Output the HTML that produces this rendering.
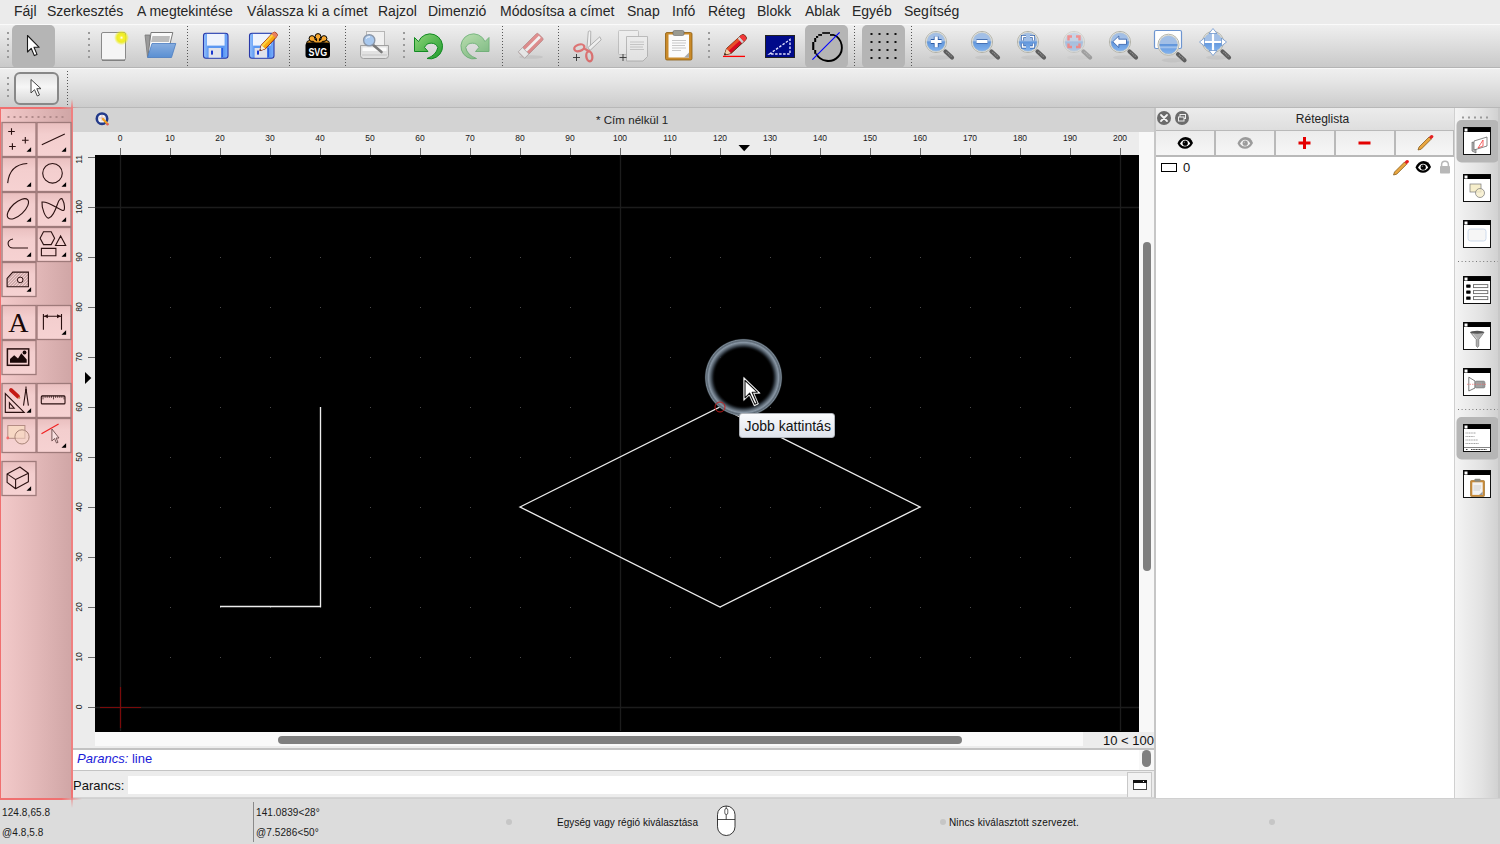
<!DOCTYPE html>
<html><head><meta charset="utf-8">
<style>
*{margin:0;padding:0;box-sizing:border-box}
html,body{width:1500px;height:844px;overflow:hidden;background:#ececec;font-family:"Liberation Sans",sans-serif;color:#222}
.a{position:absolute}
.menu span{position:absolute;top:3px;font-size:14px;line-height:17px;color:#262626}
svg{position:absolute;overflow:visible}
</style></head><body>

<!-- MENU BAR -->
<div class="a menu" style="left:0;top:0;width:1500px;height:24px;background:#ebebeb">
<span style="left:14px">Fájl</span>
<span style="left:47px">Szerkesztés</span>
<span style="left:137px">A megtekintése</span>
<span style="left:247px">Válassza ki a címet</span>
<span style="left:378px">Rajzol</span>
<span style="left:428px">Dimenzió</span>
<span style="left:500px">Módosítsa a címet</span>
<span style="left:627px">Snap</span>
<span style="left:672px">Infó</span>
<span style="left:708px">Réteg</span>
<span style="left:757px">Blokk</span>
<span style="left:805px">Ablak</span>
<span style="left:852px">Egyéb</span>
<span style="left:904px">Segítség</span>
</div>

<!-- TOOLBAR 1 -->
<div class="a" style="left:0;top:24px;width:1500px;height:44px;background:linear-gradient(#efefef,#e4e4e4 30%,#c9c9c9);border-top:1px solid #fafafa;border-bottom:1px solid #b4b4b4"></div>
<!-- TOOLBAR 2 -->
<div class="a" style="left:0;top:68px;width:1500px;height:40px;background:linear-gradient(#efefef,#e6e6e6 30%,#cccccc);border-top:1px solid #f8f8f8;border-bottom:1px solid #b8b8b8"></div>


<!-- TOOLBAR ICONS -->
<svg class="a" style="left:0;top:0" width="1500" height="110" viewBox="0 0 1500 110">
<defs>
<radialGradient id="glow"><stop offset="0" stop-color="#fff"/><stop offset="0.25" stop-color="#f8f030"/><stop offset="0.6" stop-color="#ecec10" stop-opacity="0.9"/><stop offset="1" stop-color="#ecec10" stop-opacity="0"/></radialGradient>
<linearGradient id="flop" x1="0" y1="0" x2="1" y2="0"><stop offset="0" stop-color="#9ac6ff"/><stop offset="0.2" stop-color="#5c98f2"/><stop offset="0.8" stop-color="#5a96f0"/><stop offset="1" stop-color="#7ab0ff"/></linearGradient><linearGradient id="blueF" x1="0" y1="0" x2="0" y2="1"><stop offset="0" stop-color="#88aee0"/><stop offset="1" stop-color="#5a8fd2"/></linearGradient>
<linearGradient id="zoomB2" x1="0" y1="0" x2="0" y2="1"><stop offset="0" stop-color="#5f94da"/><stop offset="1" stop-color="#86b6f0"/></linearGradient><linearGradient id="zoomB" x1="0" y1="0" x2="0" y2="1"><stop offset="0" stop-color="#a8c6ee"/><stop offset="0.5" stop-color="#6d9be0"/><stop offset="1" stop-color="#4d86d6"/></linearGradient>
<linearGradient id="green" x1="0" y1="0" x2="1" y2="1"><stop offset="0" stop-color="#8fd67a"/><stop offset="1" stop-color="#1f9a2c"/></linearGradient>
<linearGradient id="btn2" x1="0" y1="0" x2="0" y2="1"><stop offset="0" stop-color="#e2e2e2"/><stop offset="0.45" stop-color="#f6f6f6"/><stop offset="1" stop-color="#d6d6d6"/></linearGradient>
</defs>
<!-- handles & separators -->
<g fill="#9a9a9a">
<rect x="7" y="32" width="2" height="2"/><rect x="7" y="38" width="2" height="2"/><rect x="7" y="44" width="2" height="2"/><rect x="7" y="50" width="2" height="2"/><rect x="7" y="56" width="2" height="2"/>
<rect x="88" y="32" width="2" height="2"/><rect x="88" y="38" width="2" height="2"/><rect x="88" y="44" width="2" height="2"/><rect x="88" y="50" width="2" height="2"/><rect x="88" y="56" width="2" height="2"/>
<rect x="403" y="32" width="2" height="2"/><rect x="403" y="38" width="2" height="2"/><rect x="403" y="44" width="2" height="2"/><rect x="403" y="50" width="2" height="2"/><rect x="403" y="56" width="2" height="2"/>
<rect x="708" y="32" width="2" height="2"/><rect x="708" y="38" width="2" height="2"/><rect x="708" y="44" width="2" height="2"/><rect x="708" y="50" width="2" height="2"/><rect x="708" y="56" width="2" height="2"/>
<rect x="7" y="77" width="2" height="2"/><rect x="7" y="83" width="2" height="2"/><rect x="7" y="89" width="2" height="2"/><rect x="7" y="95" width="2" height="2"/>
</g>
<g stroke="#555" stroke-width="1" stroke-dasharray="1 2">
<line x1="187.5" y1="26" x2="187.5" y2="66"/><line x1="289.5" y1="26" x2="289.5" y2="66"/><line x1="345.5" y1="26" x2="345.5" y2="66"/>
<line x1="502.5" y1="26" x2="502.5" y2="66"/><line x1="558.5" y1="26" x2="558.5" y2="66"/><line x1="854.5" y1="26" x2="854.5" y2="66"/><line x1="911.5" y1="26" x2="911.5" y2="66"/>
<line x1="67.5" y1="71" x2="67.5" y2="105"/>
</g>
<!-- selected select button -->
<rect x="12" y="25" width="43" height="43" rx="5" fill="#b5b5b5"/>
<path d="M27.5 35.5 L27.5 52 L31.2 48.3 L34.3 55.6 L37 54.4 L34 47.3 L39.2 47.3 Z" fill="#fff" stroke="#1a1a1a" stroke-width="1.1" stroke-linejoin="round"/>
<!-- new -->
<rect x="101.5" y="32.5" width="24" height="27.5" rx="1.5" fill="#f5f5f5" stroke="#8a8a8a" stroke-width="1"/>
<line x1="102" y1="60.3" x2="125" y2="60.3" stroke="#777" stroke-width="1"/>
<circle cx="121.5" cy="37.7" r="7.5" fill="url(#glow)"/>
<!-- open -->
<path d="M145 35 L150 35 L150.5 57 L147.5 57 Z" fill="#9a9a9a" stroke="#777" stroke-width="0.8"/>
<path d="M151 32.5 L172.8 32.5 L170 44 L148 56 Z" fill="#fafafa" stroke="#7a7a7a" stroke-width="1"/>
<path d="M152.5 36 L170 36 L169 42 L151 42 Z" fill="#bdbdbd"/>
<path d="M152 43.5 L175.8 43.5 L171.5 57.5 L147.5 57.5 Z" fill="url(#blueF)" stroke="#4a7cc0" stroke-width="0.8"/>
<!-- save -->
<g id="floppy">
<rect x="203.5" y="33.3" width="24.5" height="25" rx="2.5" fill="url(#flop)" stroke="#2838a8" stroke-width="1.1"/>
<rect x="207" y="34" width="17.6" height="11.6" fill="#eef3fd"/>
<rect x="208.6" y="48" width="12.4" height="9.7" fill="#e0e2ea"/>
<rect x="211" y="50.6" width="2" height="4" fill="#1838d0"/>
<rect x="221.5" y="48" width="1.5" height="9" fill="#2a5ae0"/>
</g>
<!-- save as -->
<use href="#floppy" x="46" y="0"/>
<g transform="translate(259.6 51) rotate(-47)">
<path d="M0.3 0 L5.5 -2.8 L21.5 -2.8 Q24.6 -2.8 24.6 0 Q24.6 2.8 21.5 2.8 L5.5 2.8 Z" fill="#f8a810" stroke="#902010" stroke-width="0.9" stroke-linejoin="round"/>
<rect x="5.5" y="-2.7" width="16" height="2.2" fill="#ffd040"/>
<path d="M20.5 -2.7 L21.5 -2.7 Q24.3 -2.7 24.3 0 Q24.3 2.7 21.5 2.7 L20.5 2.7 Z" fill="#e88060"/>
<path d="M0.6 0 L5.5 -2.7 L5.5 2.7 Z" fill="#f4f0e0"/>
<path d="M0.3 0 L1.8 -0.9 L1.8 0.9 Z" fill="#222"/>
</g>
<!-- svg -->
<g><line x1="318" y1="43.5" x2="309.50" y2="43.50" stroke="#000" stroke-width="4"/><line x1="318" y1="43.5" x2="311.99" y2="38.55" stroke="#000" stroke-width="4"/><line x1="318" y1="43.5" x2="318.00" y2="36.50" stroke="#000" stroke-width="4"/><line x1="318" y1="43.5" x2="324.01" y2="38.55" stroke="#000" stroke-width="4"/><line x1="318" y1="43.5" x2="326.50" y2="43.50" stroke="#000" stroke-width="4"/><circle cx="309.50" cy="43.50" r="2.9" fill="#f7a830" stroke="#000" stroke-width="1"/><circle cx="311.99" cy="38.55" r="2.9" fill="#f7a830" stroke="#000" stroke-width="1"/><circle cx="318.00" cy="36.50" r="2.9" fill="#f7a830" stroke="#000" stroke-width="1"/><circle cx="324.01" cy="38.55" r="2.9" fill="#f7a830" stroke="#000" stroke-width="1"/><circle cx="326.50" cy="43.50" r="2.9" fill="#f7a830" stroke="#000" stroke-width="1"/><line x1="318" y1="43.5" x2="309.50" y2="43.50" stroke="#f7a830" stroke-width="1.8"/><line x1="318" y1="43.5" x2="311.99" y2="38.55" stroke="#f7a830" stroke-width="1.8"/><line x1="318" y1="43.5" x2="318.00" y2="36.50" stroke="#f7a830" stroke-width="1.8"/><line x1="318" y1="43.5" x2="324.01" y2="38.55" stroke="#f7a830" stroke-width="1.8"/><line x1="318" y1="43.5" x2="326.50" y2="43.50" stroke="#f7a830" stroke-width="1.8"/></g>
<rect x="305.5" y="42.5" width="24.5" height="15.5" rx="3" fill="#000"/>
<text x="317.8" y="56" font-family="Liberation Sans" font-weight="bold" font-size="10.5" fill="#fff" text-anchor="middle" transform="translate(317.8 0) scale(0.85 1) translate(-317.8 0)">SVG</text>
<!-- print preview -->
<rect x="366.5" y="31.5" width="18" height="15" fill="#f0f0f0" stroke="#b0b0b0" stroke-width="0.9"/>
<path d="M360.5 45.5 L388.5 45.5 L388.5 55.5 Q388.5 58.5 385.5 58.5 L363.5 58.5 Q360.5 58.5 360.5 55.5 Z" fill="#e2e2e2" stroke="#9a9a9a" stroke-width="0.9"/>
<rect x="362.5" y="47.5" width="24" height="3.5" fill="#fbfbfb"/>
<path d="M362 55 H387" stroke="#c4c4c4" stroke-width="1"/>
<line x1="372" y1="44" x2="381.5" y2="52" stroke="#7a7a7a" stroke-width="2.6" stroke-linecap="round"/>
<circle cx="369.2" cy="40.3" r="5.6" fill="#a8c8ee" stroke="#8a96a8" stroke-width="1.4"/>
<path d="M366 38.5 Q367.5 36.5 370 36.8" stroke="#fff" stroke-width="1" fill="none"/>
<!-- undo -->
<path d="M414.5 37.5 L418.5 41.6 A12.5 12.5 0 1 1 427 58.5 Q436.5 55 437.8 47.5 A7.3 7.3 0 0 0 424.5 47.4 L428 51.5 L414.5 51.5 Z" fill="url(#green)" stroke="#128a22" stroke-width="1" stroke-linejoin="round"/>
<!-- redo -->
<g opacity="0.5"><path d="M 489.00 37.5 L 485.00 41.6 A 12.5 12.5 0 1 0 476.50 58.5 Q 467.00 55.0 465.70 47.5 A 7.3 7.3 0 0 1 479.00 47.4 L 475.50 51.5 L 489.00 51.5 Z" fill="url(#green)" stroke="#128a22" stroke-width="1" stroke-linejoin="round"/></g>
<!-- eraser -->
<g opacity="0.55">
<ellipse cx="531" cy="57" rx="12" ry="1.8" fill="#bbb"/>
<g transform="translate(531 45.5) rotate(-45)">
<rect x="-13.5" y="-4.5" width="27" height="9" rx="1.6" fill="#dd4a4a" stroke="#9a3a3a" stroke-width="0.8"/>
<rect x="-8" y="-1.4" width="20.5" height="2.8" fill="#fff"/>
<rect x="-13.5" y="-4.5" width="6" height="9" fill="#f4f4f4" stroke="#8a8a8a" stroke-width="0.8"/>
</g>
</g>
<!-- cut -->
<g opacity="0.6">
<path d="M586.8 50 L588.3 31.5 Q589.5 30.5 590.8 31.3 L590.3 50 Z" fill="#fafafa" stroke="#777" stroke-width="0.8"/>
<path d="M588 47.5 L599.8 36.8 L601.2 39.8 L590 50.5 Z" fill="#fafafa" stroke="#777" stroke-width="0.8"/>
<ellipse cx="579.3" cy="47.8" rx="5.2" ry="3.2" fill="none" stroke="#dd3030" stroke-width="2.3" transform="rotate(-18 579.3 47.8)"/>
<ellipse cx="589.3" cy="56.3" rx="3" ry="5" fill="none" stroke="#dd3030" stroke-width="2.3" transform="rotate(-8 589.3 56.3)"/>
<path d="M584 48.5 L589.5 51.5" stroke="#dd3030" stroke-width="2"/>
</g>
<path d="M573 57.5 H580 M576.5 54 V61" stroke="#333" stroke-width="0.9"/>
<!-- copy -->
<g opacity="0.5">
<rect x="618.5" y="30.5" width="20" height="24" rx="1" fill="#f4f4f4" stroke="#999" stroke-width="0.9"/>
<path d="M626.5 36.5 L647.5 36.5 L647.5 56.5 L643 61 L626.5 61 Z" fill="#f4f4f4" stroke="#888" stroke-width="0.9"/>
<path d="M630 42 H644 M630 44.5 H644 M630 47 H643 M630 49.5 H644" stroke="#999" stroke-width="0.8"/>
</g>
<path d="M619.5 57.5 H626.5 M623 54 V61" stroke="#333" stroke-width="0.9"/>
<!-- paste -->
<rect x="665.5" y="32.5" width="26.5" height="27.5" rx="1.5" fill="#c98a2a" stroke="#8d5d10" stroke-width="0.8"/>
<path d="M668.5 34.5 L689 34.5 L689 57.5 L668.5 57.5 Z" fill="#fbfbfb"/>
<path d="M684 57.5 L689 52.5 L689 57.5 Z" fill="#aaa"/>
<path d="M672 40.5 H686 M672 43 H686 M672 45.5 H685 M672 48 H686 M672 50.5 H681" stroke="#bbb" stroke-width="0.8"/>
<rect x="673" y="30.5" width="11" height="5" rx="1.5" fill="#9a9a90" stroke="#666" stroke-width="0.6"/>
<!-- pencil -->
<line x1="723" y1="56.4" x2="745" y2="56.4" stroke="#f00" stroke-width="1.3"/>
<g transform="translate(724 55.4) rotate(-42.5)">
<path d="M0.5 0 L6.5 -3.3 L23 -3.3 L26 -3.3 Q29 -3.3 29 0 Q29 3.3 26 3.3 L6.5 3.3 Z" fill="#d80a22" stroke="#5a3010" stroke-width="0.9" stroke-linejoin="round"/>
<rect x="6.5" y="-3.2" width="16" height="3" fill="#e8502a"/>
<rect x="21.5" y="-3.2" width="2.5" height="6.4" fill="#d0d0d0"/>
<path d="M24 -3.2 L26 -3.2 Q28.6 -3.2 28.6 0 Q28.6 3.2 26 3.2 L24 3.2 Z" fill="#f03838"/>
<path d="M0.8 0 L6.5 -3.2 L6.5 3.2 Z" fill="#f2d2a8"/>
<path d="M0.5 0 L2.4 -1.1 L2.4 1.1 Z" fill="#111"/>
</g>
<!-- blue triangle -->
<rect x="765.5" y="35.5" width="29" height="22" fill="#000a8a" stroke="#222" stroke-width="1"/>
<path d="M769.5 54 L790 39.5 L790 54 Z" fill="none" stroke="#e0e0ff" stroke-width="1.4" stroke-dasharray="2.5 1.5"/>
<!-- selected circle/line -->
<rect x="805" y="25" width="43" height="43" rx="5" fill="#b5b5b5"/>
<g fill="#000"><rect x="822.2" y="32.2" width="7.8" height="1.6"/><rect x="818.2" y="34.1" width="3.8" height="1.7"/><rect x="830" y="34.1" width="4" height="1.7"/><rect x="816" y="36" width="2.2" height="1.9"/><rect x="814.2" y="38" width="2" height="4"/><rect x="812.2" y="42" width="2.1" height="8"/><rect x="814.2" y="50" width="2" height="3.8"/></g><path d="M816.2 53.6 A13.6 13.6 0 1 0 834 35" fill="none" stroke="#000" stroke-width="1.9"/>
<line x1="812.4" y1="59.6" x2="839.6" y2="32.4" stroke="#0000ff" stroke-width="1.1"/>
<!-- grid -->
<rect x="862" y="25" width="43" height="43" rx="5" fill="#b5b5b5"/>
<g fill="#111">
<rect x="870.5" y="33" width="2" height="2"/><rect x="878.5" y="33" width="2" height="2"/><rect x="886.5" y="33" width="2" height="2"/><rect x="894.5" y="33" width="2" height="2"/>
<rect x="870.5" y="41" width="2" height="2"/><rect x="878.5" y="41" width="2" height="2"/><rect x="886.5" y="41" width="2" height="2"/><rect x="894.5" y="41" width="2" height="2"/>
<rect x="870.5" y="49" width="2" height="2"/><rect x="878.5" y="49" width="2" height="2"/><rect x="886.5" y="49" width="2" height="2"/><rect x="894.5" y="49" width="2" height="2"/>
<rect x="870.5" y="57" width="2" height="2"/><rect x="878.5" y="57" width="2" height="2"/><rect x="886.5" y="57" width="2" height="2"/><rect x="894.5" y="57" width="2" height="2"/>
</g>
<g><ellipse cx="940" cy="57.5" rx="11" ry="2.2" fill="#000" opacity="0.05"/><path d="M945.5 51.5 L952 57.5" stroke="#5e5e5e" stroke-width="4.2" stroke-linecap="round"/><path d="M946.5 52 L951.5 56.5" stroke="#9a9a9a" stroke-width="1.2" stroke-dasharray="1 1"/><circle cx="936" cy="42" r="10.6" fill="#f2f2ec" stroke="#aeaea4" stroke-width="0.9"/><clipPath id="zc936"><circle cx="936" cy="42" r="9.4"/></clipPath><g clip-path="url(#zc936)"><rect x="926" y="32" width="20" height="9.2" fill="#a2bfe6"/><rect x="926" y="41.2" width="20" height="11" fill="url(#zoomB2)"/></g><circle cx="936" cy="42" r="9.4" fill="none" stroke="#c8c8c0" stroke-width="0.6"/><path d="M930.8 41.5 H941.6 M936.2 36.6 V47.2" stroke="#2d5ca6" stroke-width="4.800000000000001" fill="none"/><path d="M930.8 41.5 H941.6 M936.2 36.6 V47.2" stroke="#fff" stroke-width="3.2" fill="none"/></g><g><ellipse cx="986" cy="57.5" rx="11" ry="2.2" fill="#000" opacity="0.05"/><path d="M991.5 51.5 L998 57.5" stroke="#5e5e5e" stroke-width="4.2" stroke-linecap="round"/><path d="M992.5 52 L997.5 56.5" stroke="#9a9a9a" stroke-width="1.2" stroke-dasharray="1 1"/><circle cx="982" cy="42" r="10.6" fill="#f2f2ec" stroke="#aeaea4" stroke-width="0.9"/><clipPath id="zc982"><circle cx="982" cy="42" r="9.4"/></clipPath><g clip-path="url(#zc982)"><rect x="972" y="32" width="20" height="9.2" fill="#a2bfe6"/><rect x="972" y="41.2" width="20" height="11" fill="url(#zoomB2)"/></g><circle cx="982" cy="42" r="9.4" fill="none" stroke="#c8c8c0" stroke-width="0.6"/><path d="M976.5 41.5 H987.5" stroke="#2d5ca6" stroke-width="4.800000000000001" fill="none"/><path d="M976.5 41.5 H987.5" stroke="#fff" stroke-width="3.2" fill="none"/></g><g><ellipse cx="1032" cy="57.5" rx="11" ry="2.2" fill="#000" opacity="0.05"/><path d="M1037.5 51.5 L1044 57.5" stroke="#5e5e5e" stroke-width="4.2" stroke-linecap="round"/><path d="M1038.5 52 L1043.5 56.5" stroke="#9a9a9a" stroke-width="1.2" stroke-dasharray="1 1"/><circle cx="1028" cy="42" r="10.6" fill="#f2f2ec" stroke="#aeaea4" stroke-width="0.9"/><clipPath id="zc1028"><circle cx="1028" cy="42" r="9.4"/></clipPath><g clip-path="url(#zc1028)"><rect x="1018" y="32" width="20" height="9.2" fill="#a2bfe6"/><rect x="1018" y="41.2" width="20" height="11" fill="url(#zoomB2)"/></g><circle cx="1028" cy="42" r="9.4" fill="none" stroke="#c8c8c0" stroke-width="0.6"/><path d="M1022.5 40.5 V36.5 H1026 M1030 36.5 H1033.5 V40.5 M1033.5 43.5 V47 H1030 M1026 47 H1022.5 V43.5" fill="none" stroke="#2d5ca6" stroke-width="3"/><path d="M1022.5 40.5 V36.5 H1026 M1030 36.5 H1033.5 V40.5 M1033.5 43.5 V47 H1030 M1026 47 H1022.5 V43.5" fill="none" stroke="#fff" stroke-width="1.6"/></g><g opacity="0.45"><ellipse cx="1078" cy="57.5" rx="11" ry="2.2" fill="#000" opacity="0.05"/><path d="M1083.5 51.5 L1090 57.5" stroke="#5e5e5e" stroke-width="4.2" stroke-linecap="round"/><path d="M1084.5 52 L1089.5 56.5" stroke="#9a9a9a" stroke-width="1.2" stroke-dasharray="1 1"/><circle cx="1074" cy="42" r="10.6" fill="#f2f2ec" stroke="#aeaea4" stroke-width="0.9"/><clipPath id="zc1074"><circle cx="1074" cy="42" r="9.4"/></clipPath><g clip-path="url(#zc1074)"><rect x="1064" y="32" width="20" height="9.2" fill="#a2bfe6"/><rect x="1064" y="41.2" width="20" height="11" fill="url(#zoomB2)"/></g><circle cx="1074" cy="42" r="9.4" fill="none" stroke="#c8c8c0" stroke-width="0.6"/><path d="M1068.5 40.5 V36.5 H1072 M1076 36.5 H1079.5 V40.5 M1079.5 43.5 V47 H1076 M1072 47 H1068.5 V43.5" fill="none" stroke="#ff2a2a" stroke-width="2.4"/></g><g><ellipse cx="1124" cy="57.5" rx="11" ry="2.2" fill="#000" opacity="0.05"/><path d="M1129.5 51.5 L1136 57.5" stroke="#5e5e5e" stroke-width="4.2" stroke-linecap="round"/><path d="M1130.5 52 L1135.5 56.5" stroke="#9a9a9a" stroke-width="1.2" stroke-dasharray="1 1"/><circle cx="1120" cy="42" r="10.6" fill="#f2f2ec" stroke="#aeaea4" stroke-width="0.9"/><clipPath id="zc1120"><circle cx="1120" cy="42" r="9.4"/></clipPath><g clip-path="url(#zc1120)"><rect x="1110" y="32" width="20" height="9.2" fill="#a2bfe6"/><rect x="1110" y="41.2" width="20" height="11" fill="url(#zoomB2)"/></g><circle cx="1120" cy="42" r="9.4" fill="none" stroke="#c8c8c0" stroke-width="0.6"/><path d="M1112.8 41.7 L1118.8 36 V39.2 H1126.5 V44.4 H1118.8 V47.5 Z" fill="#fff" stroke="#2d5ca6" stroke-width="0.8" stroke-linejoin="round"/></g><rect x="1154.5" y="30.5" width="27" height="18" rx="1.5" fill="#fff" stroke="#6d95d0" stroke-width="1.2"/><g><ellipse cx="1172.5" cy="60.3" rx="11" ry="2.2" fill="#000" opacity="0.05"/><path d="M1178.0 54.3 L1184.5 60.3" stroke="#5e5e5e" stroke-width="4.2" stroke-linecap="round"/><path d="M1179.0 54.8 L1184.0 59.3" stroke="#9a9a9a" stroke-width="1.2" stroke-dasharray="1 1"/><circle cx="1168.5" cy="44.8" r="10.6" fill="#f2f2ec" stroke="#aeaea4" stroke-width="0.9"/><clipPath id="zc1168"><circle cx="1168.5" cy="44.8" r="9.4"/></clipPath><g clip-path="url(#zc1168)"><rect x="1158.5" y="34.8" width="20" height="9.2" fill="#a2bfe6"/><rect x="1158.5" y="44.0" width="20" height="11" fill="url(#zoomB2)"/></g><circle cx="1168.5" cy="44.8" r="9.4" fill="none" stroke="#c8c8c0" stroke-width="0.6"/><rect x="1159.1" y="46.3" width="18.8" height="2" fill="#fff" opacity="0.35"/></g><g><ellipse cx="1217" cy="57.5" rx="11" ry="2.2" fill="#000" opacity="0.05"/><path d="M1222.5 51.5 L1229 57.5" stroke="#5e5e5e" stroke-width="4.2" stroke-linecap="round"/><path d="M1223.5 52 L1228.5 56.5" stroke="#9a9a9a" stroke-width="1.2" stroke-dasharray="1 1"/><circle cx="1213" cy="42" r="10.6" fill="#f2f2ec" stroke="#aeaea4" stroke-width="0.9"/><clipPath id="zc1213"><circle cx="1213" cy="42" r="9.4"/></clipPath><g clip-path="url(#zc1213)"><rect x="1203" y="32" width="20" height="9.2" fill="#a2bfe6"/><rect x="1203" y="41.2" width="20" height="11" fill="url(#zoomB2)"/></g><circle cx="1213" cy="42" r="9.4" fill="none" stroke="#c8c8c0" stroke-width="0.6"/><path d="M1213 31 V53 M1202 42 H1224" stroke="#fff" stroke-width="2.2"/><path d="M1213 28.5 l-4 5 h8 Z M1213 55.5 l-4 -5 h8 Z M1199.5 42 l5 -4 v8 Z M1226.5 42 l-5 -4 v8 Z" fill="#fff" stroke="#5a88c8" stroke-width="0.7" stroke-linejoin="round"/></g>
<!-- toolbar2 select button -->
<rect x="15" y="73" width="43" height="31" rx="5" fill="url(#btn2)" stroke="#888" stroke-width="2"/>
<path d="M31 79.5 L31 93 L34.5 89.7 L37.3 96 L39.5 95 L36.8 88.7 L41 88.7 Z" fill="#fff" stroke="#444" stroke-width="1" stroke-linejoin="round"/>
</svg>

<!-- LEFT TOOLBAR -->
<div class="a" style="left:0;top:108px;width:73px;height:691px;background:linear-gradient(90deg,#f3caca,#e2b8b8 50%,#cfa5a5)"></div>
<div class="a" style="left:0;top:107px;width:80px;height:2px;background:linear-gradient(90deg,#f07070 75%,rgba(240,112,112,0))"></div>
<div class="a" style="left:0;top:108px;width:1px;height:691px;background:#f07070"></div>
<div class="a" style="left:71px;top:99px;width:2px;height:700px;background:linear-gradient(#f0707000,#f08080 9px)"></div>
<svg class="a" style="left:0;top:100px" width="80" height="410" viewBox="0 100 80 410">
<defs><linearGradient id="pb" x1="0" y1="0" x2="0" y2="1"><stop offset="0" stop-color="#e9bfbf"/><stop offset="0.35" stop-color="#f3cece"/><stop offset="1" stop-color="#f6d2d2"/></linearGradient></defs>
<rect x="7.5" y="116" width="2" height="2" fill="#b08a8a"/><rect x="13.5" y="116" width="2" height="2" fill="#b08a8a"/><rect x="19.5" y="116" width="2" height="2" fill="#b08a8a"/><rect x="25.5" y="116" width="2" height="2" fill="#b08a8a"/><rect x="31.5" y="116" width="2" height="2" fill="#b08a8a"/><rect x="37.5" y="116" width="2" height="2" fill="#b08a8a"/><rect x="43.5" y="116" width="2" height="2" fill="#b08a8a"/><rect x="49.5" y="116" width="2" height="2" fill="#b08a8a"/><rect x="55.5" y="116" width="2" height="2" fill="#b08a8a"/><rect x="61.5" y="116" width="2" height="2" fill="#b08a8a"/>
<rect x="2.0" y="122.5" width="34" height="34" fill="url(#pb)" stroke="#9e7a7a" stroke-width="1.3"/>
<rect x="37.0" y="122.5" width="34" height="34" fill="url(#pb)" stroke="#9e7a7a" stroke-width="1.3"/>
<rect x="2.0" y="157.5" width="34" height="34" fill="url(#pb)" stroke="#9e7a7a" stroke-width="1.3"/>
<rect x="37.0" y="157.5" width="34" height="34" fill="url(#pb)" stroke="#9e7a7a" stroke-width="1.3"/>
<rect x="2.0" y="192.5" width="34" height="34" fill="url(#pb)" stroke="#9e7a7a" stroke-width="1.3"/>
<rect x="37.0" y="192.5" width="34" height="34" fill="url(#pb)" stroke="#9e7a7a" stroke-width="1.3"/>
<rect x="2.0" y="227.5" width="34" height="34" fill="url(#pb)" stroke="#9e7a7a" stroke-width="1.3"/>
<rect x="37.0" y="227.5" width="34" height="34" fill="url(#pb)" stroke="#9e7a7a" stroke-width="1.3"/>
<rect x="2.0" y="262.5" width="34" height="34" fill="url(#pb)" stroke="#9e7a7a" stroke-width="1.3"/>
<rect x="2.0" y="305.5" width="34" height="34" fill="url(#pb)" stroke="#9e7a7a" stroke-width="1.3"/>
<rect x="37.0" y="305.5" width="34" height="34" fill="url(#pb)" stroke="#9e7a7a" stroke-width="1.3"/>
<rect x="2.0" y="340.5" width="34" height="34" fill="url(#pb)" stroke="#9e7a7a" stroke-width="1.3"/>
<rect x="2.0" y="383.5" width="34" height="34" fill="url(#pb)" stroke="#9e7a7a" stroke-width="1.3"/>
<rect x="37.0" y="383.5" width="34" height="34" fill="url(#pb)" stroke="#9e7a7a" stroke-width="1.3"/>
<rect x="2.0" y="418.5" width="34" height="34" fill="url(#pb)" stroke="#9e7a7a" stroke-width="1.3"/>
<rect x="37.0" y="418.5" width="34" height="34" fill="url(#pb)" stroke="#9e7a7a" stroke-width="1.3"/>
<rect x="2.0" y="461.5" width="34" height="34" fill="url(#pb)" stroke="#9e7a7a" stroke-width="1.3"/>
<path d="M8.2 131.5 h6.6 M11.5 128.2 v6.6 M22.0 140.3 h6.6 M25.3 137.0 v6.6 M9.100000000000001 146.5 h6.6 M12.4 143.2 v6.6 " fill="none" stroke="#2a1010" stroke-width="1.1" stroke-width="1.2"/><path d="M31.1 147.2 L31.1 151.8 L26.5 151.8 Z" fill="#000"/><path d="M41.8 144.7 L64.8 134" fill="none" stroke="#2a1010" stroke-width="1.1"/><path d="M66.1 147.2 L66.1 151.8 L61.5 151.8 Z" fill="#000"/><path d="M7.7 183.1 Q9.5 164.5 27.3 163.5" fill="none" stroke="#2a1010" stroke-width="1.1"/><path d="M31.1 182.2 L31.1 186.8 L26.5 186.8 Z" fill="#000"/><circle cx="52.5" cy="173.3" r="9.8" fill="none" stroke="#2a1010" stroke-width="1.1"/><path d="M66.1 182.2 L66.1 186.8 L61.5 186.8 Z" fill="#000"/><ellipse cx="17.9" cy="208.8" rx="13.3" ry="6.2" transform="rotate(-43 17.9 208.8)" fill="none" stroke="#2a1010" stroke-width="1.1"/><path d="M31.1 217.2 L31.1 221.8 L26.5 221.8 Z" fill="#000"/><path d="M42.0 202 C41.5 208 45.5 219 49.0 218 C52.5 217 55.5 210 57.5 204 C59.0 199 61.5 197.5 62.5 199.5 C64.5 203 65.5 211 63.0 210.5 C58.5 209.5 48.5 201 42.0 202 Z" fill="none" stroke="#2a1010" stroke-width="1.1"/><path d="M66.1 217.2 L66.1 221.8 L61.5 221.8 Z" fill="#000"/><path d="M13.0 239 Q7.7 240 8.1 244 Q8.8 248 13.0 248 L28.0 248" fill="none" stroke="#2a1010" stroke-width="1.1" stroke-width="1.2"/><path d="M31.1 252.2 L31.1 256.8 L26.5 256.8 Z" fill="#000"/><path d="M40.1 238.2 L43.5 231.8 L51.2 231.8 L54.6 238.2 L51.2 244.6 L43.5 244.6 Z M55.5 245.5 L60.6 236 L65.7 245.5 Z M41.4 248.4 h14.5 v7.3 h-14.5 Z" fill="none" stroke="#2a1010" stroke-width="1.1"/><path d="M66.1 252.2 L66.1 256.8 L61.5 256.8 Z" fill="#000"/><clipPath id="hc"><path d="M7.1 286.7 L7.1 278.5 L12.8 272.1 L28.4 272.1 L28.4 286.7 Z"/></clipPath><g clip-path="url(#hc)" stroke="#7a5a5a" stroke-width="0.6"><line x1="-12.5" y1="288" x2="4.5" y2="271"/><line x1="-9.5" y1="288" x2="7.5" y2="271"/><line x1="-6.5" y1="288" x2="10.5" y2="271"/><line x1="-3.5" y1="288" x2="13.5" y2="271"/><line x1="-0.5" y1="288" x2="16.5" y2="271"/><line x1="2.5" y1="288" x2="19.5" y2="271"/><line x1="5.5" y1="288" x2="22.5" y2="271"/><line x1="8.5" y1="288" x2="25.5" y2="271"/><line x1="11.5" y1="288" x2="28.5" y2="271"/><line x1="14.5" y1="288" x2="31.5" y2="271"/><line x1="17.5" y1="288" x2="34.5" y2="271"/><line x1="20.5" y1="288" x2="37.5" y2="271"/><line x1="23.5" y1="288" x2="40.5" y2="271"/><line x1="26.5" y1="288" x2="43.5" y2="271"/><line x1="29.5" y1="288" x2="46.5" y2="271"/></g><path d="M7.1 286.7 L7.1 278.5 L12.8 272.1 L28.4 272.1 L28.4 286.7 Z" fill="none" stroke="#2a1010" stroke-width="1.1"/><circle cx="20.2" cy="279.9" r="2.8" fill="#f6d0d0" stroke="#2a1010" stroke-width="1"/><path d="M31.1 287.2 L31.1 291.8 L26.5 291.8 Z" fill="#000"/><text x="18.3" y="331.8" font-family="Liberation Serif" font-size="28" fill="#1a0808" text-anchor="middle">A</text><path d="M43.4 314 V329.7 M61.5 314 V329.7 M43.9 316.2 H61.0" fill="none" stroke="#2a1010" stroke-width="1.1"/><path d="M43.9 316.2 l4 -2 v4 Z M61.0 316.2 l-4 -2 v4 Z" fill="#2a1010"/><path d="M66.1 330.2 L66.1 334.8 L61.5 334.8 Z" fill="#000"/><rect x="7.4" y="348.9" width="21.3" height="16.4" fill="none" stroke="#2a1010" stroke-width="1.5"/><path d="M10.0 362.7 L10.0 359 L14.2 355.3 L18.0 358.5 L21.3 353.2 L26.7 359.5 L26.7 362.7 Z" fill="#1a0808"/><circle cx="24.5" cy="352.5" r="1.9" fill="#1a0808"/><path d="M5.3 393.5 L5.3 412.4 L24.2 412.4 Z M9.4 402.8 L9.4 408.2 L14.2 408.2 Z" fill="none" stroke="#2a1010" stroke-width="1.1" stroke-width="1.3" stroke-linejoin="miter"/><path d="M11.0 390 L18.0 396.5" stroke="#c41a14" stroke-width="3.8" stroke-linecap="round"/><path d="M18.5 397 L20.1 398.4" stroke="#c08a50" stroke-width="1.5"/><path d="M23.5 405.6 L26.0 388.5 L28.4 405.6 M26.0 386.5 v3" fill="none" stroke="#2a1010" stroke-width="1.1"/><circle cx="26.0" cy="390" r="1" fill="#2a1010"/><path d="M31.1 408.2 L31.1 412.8 L26.5 412.8 Z" fill="#000"/><rect x="41.3" y="395.9" width="23.7" height="8" rx="1" fill="none" stroke="#2a1010" stroke-width="1.1"/><path d="M43.0 395.9 v3.5 M45.1 395.9 v2 M47.2 395.9 v2 M49.3 395.9 v2 M51.4 395.9 v2 M53.5 395.9 v3.5 M55.6 395.9 v2 M57.7 395.9 v2 M59.8 395.9 v2 M61.900000000000006 395.9 v2 M64.0 395.9 v3.5 " stroke="#2a1010" stroke-width="0.7"/><rect x="7.8" y="425.5" width="17.1" height="12.8" fill="#f7d8c4" stroke="#b48c84" stroke-width="1"/><circle cx="22.0" cy="436.9" r="7.1" fill="#f5d5c4" fill-opacity="0.55" stroke="#a88478" stroke-width="1"/><circle cx="7.8" cy="438" r="1.4" fill="#f06a6a"/><line x1="41.5" y1="433.8" x2="58.6" y2="424.1" stroke="#f02020" stroke-width="1.2"/><path d="M51.9 429 L51.9 441 L54.5 438.5 L56.5 443 L58.0 442.4 L56.1 438 L59.0 438 Z" fill="#f8e0e0" stroke="#6a4a4a" stroke-width="0.9"/><path d="M66.1 443.2 L66.1 447.8 L61.5 447.8 Z" fill="#000"/><path d="M7.1 473.9 L19.9 467 L28.4 473.2 L28.4 481.7 L15.6 488.8 L7.1 482.4 Z M7.1 473.9 L15.6 479.6 L28.4 473.2 M15.6 479.6 V488.8" fill="none" stroke="#2a1010" stroke-width="1.1" stroke-linejoin="round"/><path d="M31.1 486.2 L31.1 490.8 L26.5 490.8 Z" fill="#000"/>
</svg>

<!-- TAB BAR -->
<div class="a" style="left:73px;top:108px;width:1081px;height:24px;background:#d3d3d3"></div>
<div class="a" style="left:596px;top:113px;font-size:11.6px;line-height:14px;color:#222">* Cím nélkül 1</div>

<svg class="a" style="left:90px;top:108px" width="25" height="22" viewBox="90 108 25 22"><circle cx="102" cy="118.7" r="5.2" fill="#f4f4f4" stroke="#233a8a" stroke-width="2.6"/><path d="M99 118 H105 M102 115 V121" stroke="#c88" stroke-width="0.5"/><path d="M103 119 L107.5 124" stroke="#f0a020" stroke-width="2.2" stroke-linecap="round"/><circle cx="107.5" cy="124.3" r="1.2" fill="#e06060"/></svg>
<!-- RULERS -->
<div class="a" style="left:73px;top:132px;width:1066px;height:23px;background:#ececec"></div>
<div class="a" style="left:73px;top:132px;width:22px;height:616px;background:#ececec"></div>

<!-- CANVAS -->
<div class="a" style="left:95px;top:155px;width:1044px;height:577px;background:#000"></div>

<!-- RULER + CANVAS SVG -->
<svg class="a" style="left:73px;top:132px" width="1066" height="616" viewBox="73 132 1066 616">
<g font-family="Liberation Sans" font-size="9.9" fill="#1a1a1a" text-anchor="middle"><text transform="translate(120 141) scale(0.86 1)">0</text><text transform="translate(170 141) scale(0.86 1)">10</text><text transform="translate(220 141) scale(0.86 1)">20</text><text transform="translate(270 141) scale(0.86 1)">30</text><text transform="translate(320 141) scale(0.86 1)">40</text><text transform="translate(370 141) scale(0.86 1)">50</text><text transform="translate(420 141) scale(0.86 1)">60</text><text transform="translate(470 141) scale(0.86 1)">70</text><text transform="translate(520 141) scale(0.86 1)">80</text><text transform="translate(570 141) scale(0.86 1)">90</text><text transform="translate(620 141) scale(0.86 1)">100</text><text transform="translate(670 141) scale(0.86 1)">110</text><text transform="translate(720 141) scale(0.86 1)">120</text><text transform="translate(770 141) scale(0.86 1)">130</text><text transform="translate(820 141) scale(0.86 1)">140</text><text transform="translate(870 141) scale(0.86 1)">150</text><text transform="translate(920 141) scale(0.86 1)">160</text><text transform="translate(970 141) scale(0.86 1)">170</text><text transform="translate(1020 141) scale(0.86 1)">180</text><text transform="translate(1070 141) scale(0.86 1)">190</text><text transform="translate(1120 141) scale(0.86 1)">200</text></g>
<g stroke="#6a6a6a" stroke-width="1"><line x1="120.5" y1="148" x2="120.5" y2="155"/><line x1="170.5" y1="148" x2="170.5" y2="155"/><line x1="220.5" y1="148" x2="220.5" y2="155"/><line x1="270.5" y1="148" x2="270.5" y2="155"/><line x1="320.5" y1="148" x2="320.5" y2="155"/><line x1="370.5" y1="148" x2="370.5" y2="155"/><line x1="420.5" y1="148" x2="420.5" y2="155"/><line x1="470.5" y1="148" x2="470.5" y2="155"/><line x1="520.5" y1="148" x2="520.5" y2="155"/><line x1="570.5" y1="148" x2="570.5" y2="155"/><line x1="620.5" y1="148" x2="620.5" y2="155"/><line x1="670.5" y1="148" x2="670.5" y2="155"/><line x1="720.5" y1="148" x2="720.5" y2="155"/><line x1="770.5" y1="148" x2="770.5" y2="155"/><line x1="820.5" y1="148" x2="820.5" y2="155"/><line x1="870.5" y1="148" x2="870.5" y2="155"/><line x1="920.5" y1="148" x2="920.5" y2="155"/><line x1="970.5" y1="148" x2="970.5" y2="155"/><line x1="1020.5" y1="148" x2="1020.5" y2="155"/><line x1="1070.5" y1="148" x2="1070.5" y2="155"/><line x1="1120.5" y1="148" x2="1120.5" y2="155"/><line x1="88" y1="707.5" x2="95" y2="707.5"/><line x1="88" y1="657.5" x2="95" y2="657.5"/><line x1="88" y1="607.5" x2="95" y2="607.5"/><line x1="88" y1="557.5" x2="95" y2="557.5"/><line x1="88" y1="507.5" x2="95" y2="507.5"/><line x1="88" y1="457.5" x2="95" y2="457.5"/><line x1="88" y1="407.5" x2="95" y2="407.5"/><line x1="88" y1="357.5" x2="95" y2="357.5"/><line x1="88" y1="307.5" x2="95" y2="307.5"/><line x1="88" y1="257.5" x2="95" y2="257.5"/><line x1="88" y1="207.5" x2="95" y2="207.5"/><line x1="88" y1="157.5" x2="95" y2="157.5"/></g>
<clipPath id="vr"><rect x="73" y="155" width="22" height="593"/></clipPath><g clip-path="url(#vr)" font-family="Liberation Sans" font-size="9.9" fill="#1a1a1a" text-anchor="middle"><text transform="translate(81.5 707) rotate(-90) scale(0.86 1)">0</text><text transform="translate(81.5 657) rotate(-90) scale(0.86 1)">10</text><text transform="translate(81.5 607) rotate(-90) scale(0.86 1)">20</text><text transform="translate(81.5 557) rotate(-90) scale(0.86 1)">30</text><text transform="translate(81.5 507) rotate(-90) scale(0.86 1)">40</text><text transform="translate(81.5 457) rotate(-90) scale(0.86 1)">50</text><text transform="translate(81.5 407) rotate(-90) scale(0.86 1)">60</text><text transform="translate(81.5 357) rotate(-90) scale(0.86 1)">70</text><text transform="translate(81.5 307) rotate(-90) scale(0.86 1)">80</text><text transform="translate(81.5 257) rotate(-90) scale(0.86 1)">90</text><text transform="translate(81.5 207) rotate(-90) scale(0.86 1)">100</text><text transform="translate(81.5 157) rotate(-90) scale(0.86 1)">110</text></g>
<path d="M738.5 145 L750 145 L744.2 151.2 Z" fill="#000"/><path d="M85 372 L85 384 L91.3 378 Z" fill="#000"/><g fill="#4a4a4a"><rect x="120" y="707" width="1" height="1"/><rect x="120" y="657" width="1" height="1"/><rect x="120" y="607" width="1" height="1"/><rect x="120" y="557" width="1" height="1"/><rect x="120" y="507" width="1" height="1"/><rect x="120" y="457" width="1" height="1"/><rect x="120" y="407" width="1" height="1"/><rect x="120" y="357" width="1" height="1"/><rect x="120" y="307" width="1" height="1"/><rect x="120" y="257" width="1" height="1"/><rect x="120" y="207" width="1" height="1"/><rect x="120" y="157" width="1" height="1"/><rect x="170" y="707" width="1" height="1"/><rect x="170" y="657" width="1" height="1"/><rect x="170" y="607" width="1" height="1"/><rect x="170" y="557" width="1" height="1"/><rect x="170" y="507" width="1" height="1"/><rect x="170" y="457" width="1" height="1"/><rect x="170" y="407" width="1" height="1"/><rect x="170" y="357" width="1" height="1"/><rect x="170" y="307" width="1" height="1"/><rect x="170" y="257" width="1" height="1"/><rect x="170" y="207" width="1" height="1"/><rect x="170" y="157" width="1" height="1"/><rect x="220" y="707" width="1" height="1"/><rect x="220" y="657" width="1" height="1"/><rect x="220" y="607" width="1" height="1"/><rect x="220" y="557" width="1" height="1"/><rect x="220" y="507" width="1" height="1"/><rect x="220" y="457" width="1" height="1"/><rect x="220" y="407" width="1" height="1"/><rect x="220" y="357" width="1" height="1"/><rect x="220" y="307" width="1" height="1"/><rect x="220" y="257" width="1" height="1"/><rect x="220" y="207" width="1" height="1"/><rect x="220" y="157" width="1" height="1"/><rect x="270" y="707" width="1" height="1"/><rect x="270" y="657" width="1" height="1"/><rect x="270" y="607" width="1" height="1"/><rect x="270" y="557" width="1" height="1"/><rect x="270" y="507" width="1" height="1"/><rect x="270" y="457" width="1" height="1"/><rect x="270" y="407" width="1" height="1"/><rect x="270" y="357" width="1" height="1"/><rect x="270" y="307" width="1" height="1"/><rect x="270" y="257" width="1" height="1"/><rect x="270" y="207" width="1" height="1"/><rect x="270" y="157" width="1" height="1"/><rect x="320" y="707" width="1" height="1"/><rect x="320" y="657" width="1" height="1"/><rect x="320" y="607" width="1" height="1"/><rect x="320" y="557" width="1" height="1"/><rect x="320" y="507" width="1" height="1"/><rect x="320" y="457" width="1" height="1"/><rect x="320" y="407" width="1" height="1"/><rect x="320" y="357" width="1" height="1"/><rect x="320" y="307" width="1" height="1"/><rect x="320" y="257" width="1" height="1"/><rect x="320" y="207" width="1" height="1"/><rect x="320" y="157" width="1" height="1"/><rect x="370" y="707" width="1" height="1"/><rect x="370" y="657" width="1" height="1"/><rect x="370" y="607" width="1" height="1"/><rect x="370" y="557" width="1" height="1"/><rect x="370" y="507" width="1" height="1"/><rect x="370" y="457" width="1" height="1"/><rect x="370" y="407" width="1" height="1"/><rect x="370" y="357" width="1" height="1"/><rect x="370" y="307" width="1" height="1"/><rect x="370" y="257" width="1" height="1"/><rect x="370" y="207" width="1" height="1"/><rect x="370" y="157" width="1" height="1"/><rect x="420" y="707" width="1" height="1"/><rect x="420" y="657" width="1" height="1"/><rect x="420" y="607" width="1" height="1"/><rect x="420" y="557" width="1" height="1"/><rect x="420" y="507" width="1" height="1"/><rect x="420" y="457" width="1" height="1"/><rect x="420" y="407" width="1" height="1"/><rect x="420" y="357" width="1" height="1"/><rect x="420" y="307" width="1" height="1"/><rect x="420" y="257" width="1" height="1"/><rect x="420" y="207" width="1" height="1"/><rect x="420" y="157" width="1" height="1"/><rect x="470" y="707" width="1" height="1"/><rect x="470" y="657" width="1" height="1"/><rect x="470" y="607" width="1" height="1"/><rect x="470" y="557" width="1" height="1"/><rect x="470" y="507" width="1" height="1"/><rect x="470" y="457" width="1" height="1"/><rect x="470" y="407" width="1" height="1"/><rect x="470" y="357" width="1" height="1"/><rect x="470" y="307" width="1" height="1"/><rect x="470" y="257" width="1" height="1"/><rect x="470" y="207" width="1" height="1"/><rect x="470" y="157" width="1" height="1"/><rect x="520" y="707" width="1" height="1"/><rect x="520" y="657" width="1" height="1"/><rect x="520" y="607" width="1" height="1"/><rect x="520" y="557" width="1" height="1"/><rect x="520" y="507" width="1" height="1"/><rect x="520" y="457" width="1" height="1"/><rect x="520" y="407" width="1" height="1"/><rect x="520" y="357" width="1" height="1"/><rect x="520" y="307" width="1" height="1"/><rect x="520" y="257" width="1" height="1"/><rect x="520" y="207" width="1" height="1"/><rect x="520" y="157" width="1" height="1"/><rect x="570" y="707" width="1" height="1"/><rect x="570" y="657" width="1" height="1"/><rect x="570" y="607" width="1" height="1"/><rect x="570" y="557" width="1" height="1"/><rect x="570" y="507" width="1" height="1"/><rect x="570" y="457" width="1" height="1"/><rect x="570" y="407" width="1" height="1"/><rect x="570" y="357" width="1" height="1"/><rect x="570" y="307" width="1" height="1"/><rect x="570" y="257" width="1" height="1"/><rect x="570" y="207" width="1" height="1"/><rect x="570" y="157" width="1" height="1"/><rect x="620" y="707" width="1" height="1"/><rect x="620" y="657" width="1" height="1"/><rect x="620" y="607" width="1" height="1"/><rect x="620" y="557" width="1" height="1"/><rect x="620" y="507" width="1" height="1"/><rect x="620" y="457" width="1" height="1"/><rect x="620" y="407" width="1" height="1"/><rect x="620" y="357" width="1" height="1"/><rect x="620" y="307" width="1" height="1"/><rect x="620" y="257" width="1" height="1"/><rect x="620" y="207" width="1" height="1"/><rect x="620" y="157" width="1" height="1"/><rect x="670" y="707" width="1" height="1"/><rect x="670" y="657" width="1" height="1"/><rect x="670" y="607" width="1" height="1"/><rect x="670" y="557" width="1" height="1"/><rect x="670" y="507" width="1" height="1"/><rect x="670" y="457" width="1" height="1"/><rect x="670" y="407" width="1" height="1"/><rect x="670" y="357" width="1" height="1"/><rect x="670" y="307" width="1" height="1"/><rect x="670" y="257" width="1" height="1"/><rect x="670" y="207" width="1" height="1"/><rect x="670" y="157" width="1" height="1"/><rect x="720" y="707" width="1" height="1"/><rect x="720" y="657" width="1" height="1"/><rect x="720" y="607" width="1" height="1"/><rect x="720" y="557" width="1" height="1"/><rect x="720" y="507" width="1" height="1"/><rect x="720" y="457" width="1" height="1"/><rect x="720" y="407" width="1" height="1"/><rect x="720" y="357" width="1" height="1"/><rect x="720" y="307" width="1" height="1"/><rect x="720" y="257" width="1" height="1"/><rect x="720" y="207" width="1" height="1"/><rect x="720" y="157" width="1" height="1"/><rect x="770" y="707" width="1" height="1"/><rect x="770" y="657" width="1" height="1"/><rect x="770" y="607" width="1" height="1"/><rect x="770" y="557" width="1" height="1"/><rect x="770" y="507" width="1" height="1"/><rect x="770" y="457" width="1" height="1"/><rect x="770" y="407" width="1" height="1"/><rect x="770" y="357" width="1" height="1"/><rect x="770" y="307" width="1" height="1"/><rect x="770" y="257" width="1" height="1"/><rect x="770" y="207" width="1" height="1"/><rect x="770" y="157" width="1" height="1"/><rect x="820" y="707" width="1" height="1"/><rect x="820" y="657" width="1" height="1"/><rect x="820" y="607" width="1" height="1"/><rect x="820" y="557" width="1" height="1"/><rect x="820" y="507" width="1" height="1"/><rect x="820" y="457" width="1" height="1"/><rect x="820" y="407" width="1" height="1"/><rect x="820" y="357" width="1" height="1"/><rect x="820" y="307" width="1" height="1"/><rect x="820" y="257" width="1" height="1"/><rect x="820" y="207" width="1" height="1"/><rect x="820" y="157" width="1" height="1"/><rect x="870" y="707" width="1" height="1"/><rect x="870" y="657" width="1" height="1"/><rect x="870" y="607" width="1" height="1"/><rect x="870" y="557" width="1" height="1"/><rect x="870" y="507" width="1" height="1"/><rect x="870" y="457" width="1" height="1"/><rect x="870" y="407" width="1" height="1"/><rect x="870" y="357" width="1" height="1"/><rect x="870" y="307" width="1" height="1"/><rect x="870" y="257" width="1" height="1"/><rect x="870" y="207" width="1" height="1"/><rect x="870" y="157" width="1" height="1"/><rect x="920" y="707" width="1" height="1"/><rect x="920" y="657" width="1" height="1"/><rect x="920" y="607" width="1" height="1"/><rect x="920" y="557" width="1" height="1"/><rect x="920" y="507" width="1" height="1"/><rect x="920" y="457" width="1" height="1"/><rect x="920" y="407" width="1" height="1"/><rect x="920" y="357" width="1" height="1"/><rect x="920" y="307" width="1" height="1"/><rect x="920" y="257" width="1" height="1"/><rect x="920" y="207" width="1" height="1"/><rect x="920" y="157" width="1" height="1"/><rect x="970" y="707" width="1" height="1"/><rect x="970" y="657" width="1" height="1"/><rect x="970" y="607" width="1" height="1"/><rect x="970" y="557" width="1" height="1"/><rect x="970" y="507" width="1" height="1"/><rect x="970" y="457" width="1" height="1"/><rect x="970" y="407" width="1" height="1"/><rect x="970" y="357" width="1" height="1"/><rect x="970" y="307" width="1" height="1"/><rect x="970" y="257" width="1" height="1"/><rect x="970" y="207" width="1" height="1"/><rect x="970" y="157" width="1" height="1"/><rect x="1020" y="707" width="1" height="1"/><rect x="1020" y="657" width="1" height="1"/><rect x="1020" y="607" width="1" height="1"/><rect x="1020" y="557" width="1" height="1"/><rect x="1020" y="507" width="1" height="1"/><rect x="1020" y="457" width="1" height="1"/><rect x="1020" y="407" width="1" height="1"/><rect x="1020" y="357" width="1" height="1"/><rect x="1020" y="307" width="1" height="1"/><rect x="1020" y="257" width="1" height="1"/><rect x="1020" y="207" width="1" height="1"/><rect x="1020" y="157" width="1" height="1"/><rect x="1070" y="707" width="1" height="1"/><rect x="1070" y="657" width="1" height="1"/><rect x="1070" y="607" width="1" height="1"/><rect x="1070" y="557" width="1" height="1"/><rect x="1070" y="507" width="1" height="1"/><rect x="1070" y="457" width="1" height="1"/><rect x="1070" y="407" width="1" height="1"/><rect x="1070" y="357" width="1" height="1"/><rect x="1070" y="307" width="1" height="1"/><rect x="1070" y="257" width="1" height="1"/><rect x="1070" y="207" width="1" height="1"/><rect x="1070" y="157" width="1" height="1"/><rect x="1120" y="707" width="1" height="1"/><rect x="1120" y="657" width="1" height="1"/><rect x="1120" y="607" width="1" height="1"/><rect x="1120" y="557" width="1" height="1"/><rect x="1120" y="507" width="1" height="1"/><rect x="1120" y="457" width="1" height="1"/><rect x="1120" y="407" width="1" height="1"/><rect x="1120" y="357" width="1" height="1"/><rect x="1120" y="307" width="1" height="1"/><rect x="1120" y="257" width="1" height="1"/><rect x="1120" y="207" width="1" height="1"/><rect x="1120" y="157" width="1" height="1"/></g>
<g stroke="#1c1c1c" stroke-width="1.3"><line x1="120.5" y1="155" x2="120.5" y2="731"/><line x1="620.5" y1="155" x2="620.5" y2="731"/><line x1="1120.5" y1="155" x2="1120.5" y2="731"/><line x1="95" y1="207.5" x2="1139" y2="207.5"/><line x1="95" y1="707.5" x2="1139" y2="707.5"/></g>
<path d="M100 707.5 H141 M120.5 687 V728" stroke="#7a0a0a" stroke-width="1.2"/>
<g stroke="#ececec" stroke-width="1.35" fill="none"><path d="M320.5 407 V606.5 H220"/><path d="M520 507 L720 407 L920 507 L720 607 Z"/></g>
<defs><radialGradient id="ring" cx="0.5" cy="0.5" r="0.5"><stop offset="0.72" stop-color="#000" stop-opacity="0"/><stop offset="0.8" stop-color="#2a323a"/><stop offset="0.86" stop-color="#66727e"/><stop offset="0.9" stop-color="#8896a4"/><stop offset="0.94" stop-color="#5c6874"/><stop offset="0.97" stop-color="#7a8894"/><stop offset="1" stop-color="#303840" stop-opacity="0.3"/></radialGradient></defs><circle cx="743.5" cy="377.5" r="39" fill="url(#ring)"/>
<path d="M743.7 377.3 L743.7 400.6 L749.3 395.2 L754.2 405.9 L758.5 403.9 L754 393.5 L760.2 393.2 Z" fill="#fff" stroke="#fff" stroke-width="0.6" stroke-linejoin="round"/>
<path d="M745 380.3 L745 397.8 L749.7 393.2 L754.8 404.2 L757 403.2 L752.2 392.3 L757.3 392.2 Z" fill="#fff" stroke="#111" stroke-width="1.1" stroke-linejoin="round"/>
<circle cx="720" cy="407" r="5" fill="none" stroke="#c81818" stroke-width="0.9"/>
</svg>
<!-- SCROLLBARS -->
<div class="a" style="left:1139px;top:132px;width:15px;height:616px;background:#f8f8f8"></div>
<div class="a" style="left:1143px;top:242px;width:8px;height:329px;border-radius:4px;background:#7f7f7f"></div>
<div class="a" style="left:95px;top:732px;width:1044px;height:14px;background:#f9f9f9"></div>
<div class="a" style="left:278px;top:736px;width:684px;height:8px;border-radius:4px;background:#7f7f7f"></div>
<div class="a" style="left:1083px;top:732px;width:71px;height:14px;background:#ececec"></div>
<div class="a" style="left:1103px;top:733px;font-size:13px;line-height:15px;color:#111">10 &lt; 100</div>

<!-- COMMAND -->
<div class="a" style="left:73px;top:746px;width:1081px;height:2px;background:#ececec"></div><div class="a" style="left:73px;top:748px;width:1081px;height:2px;background:#c2c2c2"></div>
<div class="a" style="left:73px;top:750px;width:1081px;height:20px;background:#fff"></div>
<div class="a" style="left:1139px;top:750px;width:15px;height:20px;background:#f8f8f8"></div>
<div class="a" style="left:1142px;top:750px;width:9px;height:17px;border-radius:4.5px;background:#7f7f7f"></div>
<div class="a" style="left:77px;top:751px;font-size:13px;line-height:15px;color:#1a1ad8"><i>Parancs:</i> line</div>
<div class="a" style="left:73px;top:770px;width:1081px;height:1px;background:#c4c4c4"></div>
<div class="a" style="left:73px;top:771px;width:1081px;height:27px;background:#ececec"></div>
<div class="a" style="left:73px;top:778px;font-size:13px;line-height:15px;color:#111">Parancs:</div>
<div class="a" style="left:128px;top:776px;width:999px;height:18px;background:#fff"></div>
<div class="a" style="left:1127px;top:772px;width:25px;height:26px;background:#f2f2f2;border:1px solid #c8c8c8"></div>
<svg class="a" style="left:1127px;top:772px" width="25" height="26" viewBox="1127 772 25 26"><rect x="1133.5" y="780.5" width="13" height="9" fill="#fff" stroke="#444" stroke-width="1"/><rect x="1133" y="780" width="14" height="3" fill="#111"/><rect x="1143" y="781" width="1" height="1" fill="#fff"/></svg>
<div class="a" style="left:73px;top:797px;width:1081px;height:2px;background:#d4d4d4"></div>

<!-- LAYER PANEL -->
<div class="a" style="left:1154px;top:108px;width:2px;height:691px;background:#c6c6c6"></div>
<div class="a" style="left:1156px;top:108px;width:298px;height:22px;background:linear-gradient(#ececec,#dedede)"></div>
<div class="a" style="left:1156px;top:112px;width:298px;text-align:center;font-size:12px;line-height:14px;color:#222;padding-left:35px">Réteglista</div>
<svg class="a" style="left:1156px;top:108px" width="40" height="22" viewBox="1156 108 40 22">
<circle cx="1164" cy="118" r="7" fill="#6b6b6b"/><path d="M1161 115 L1167 121 M1167 115 L1161 121" stroke="#f4f4f4" stroke-width="1.8" stroke-linecap="round"/>
<circle cx="1182" cy="118" r="7" fill="#6b6b6b"/><rect x="1180" y="114.5" width="5.5" height="4" fill="none" stroke="#eee" stroke-width="1"/><rect x="1178.5" y="117" width="5.5" height="4" fill="#6b6b6b" stroke="#eee" stroke-width="1"/>
</svg>
<div class="a" style="left:1156px;top:130px;width:298px;height:27px;background:#b9b9b9"></div>
<div class="a" style="left:1156px;top:131px;width:58px;height:24px;background:linear-gradient(#ececec,#f6f6f6)"></div>
<div class="a" style="left:1216px;top:131px;width:58px;height:24px;background:linear-gradient(#ececec,#f6f6f6)"></div>
<div class="a" style="left:1276px;top:131px;width:58px;height:24px;background:linear-gradient(#ececec,#f6f6f6)"></div>
<div class="a" style="left:1336px;top:131px;width:58px;height:24px;background:linear-gradient(#ececec,#f6f6f6)"></div>
<div class="a" style="left:1396px;top:131px;width:57px;height:24px;background:linear-gradient(#ececec,#f6f6f6)"></div>
<div class="a" style="left:1156px;top:157px;width:298px;height:642px;background:#fff"></div>
<div class="a" style="left:1454px;top:108px;width:1px;height:691px;background:#d0d0d0"></div>
<svg class="a" style="left:1156px;top:130px" width="298" height="50" viewBox="1156 130 298 50">
<defs>
<g id="eye"><path d="M-7.5 0.5 Q-5 -6 0.5 -6 Q6 -6 8 0 Q5 5.8 0 5.8 Q-5 5.8 -7.5 0.5 Z" fill="#000"/><path d="M-5 0.8 Q-3 -3.2 0 -3.2 Q3.5 -3.2 5.2 0.8 Q3 3.6 0 3.6 Q-3 3.6 -5 0.8 Z" fill="#fff"/><circle cx="0.2" cy="0.2" r="2.6" fill="#000"/><circle cx="-0.6" cy="-0.7" r="0.7" fill="#666"/></g>
<g id="pencil"><path d="M-6 6 L4 -4 L6.2 -1.8 L-3.8 8.2 L-7 9 Z" fill="#e9a640" stroke="#7a5010" stroke-width="0.7"/><path d="M4 -4 L5.8 -5.8 Q7 -6.5 8 -5.5 Q9 -4.5 8 -3.5 L6.2 -1.8 Z" fill="#e52020"/></g>
</defs>
<use href="#eye" x="1185" y="143"/>
<g opacity="0.35"><use href="#eye" x="1245" y="143"/></g>
<path d="M1298.5 143 H1310.5 M1304.5 137 V149" stroke="#e40000" stroke-width="3"/>
<path d="M1358.5 143 H1370.5" stroke="#e40000" stroke-width="3"/>
<use href="#pencil" x="1425" y="141"/>
<rect x="1161.5" y="163.5" width="15" height="8" fill="none" stroke="#000" stroke-width="1"/>
<use href="#pencil" x="1400.5" y="166"/>
<use href="#eye" x="1423" y="167"/>
<rect x="1440" y="166" width="10" height="7.6" rx="0.8" fill="#b8b8b8"/><path d="M1441.6 166.5 V164.8 Q1441.6 161.3 1445 161.3 Q1448.4 161.3 1448.4 164.8 V166.5" fill="none" stroke="#b8b8b8" stroke-width="1.5"/>
</svg>
<div class="a" style="left:1183px;top:160px;font-size:13px;line-height:15px;color:#111">0</div>

<!-- RIGHT DOCK -->
<div class="a" style="left:1455px;top:108px;width:45px;height:691px;background:linear-gradient(90deg,#f4f4f4,#e2e2e2 60%,#cfcfcf)"></div>
<svg class="a" style="left:1455px;top:108px" width="45" height="400" viewBox="1455 108 45 400">
<defs>
<g id="win"><rect x="0.5" y="0.5" width="27" height="27" fill="#fff" stroke="#111" stroke-width="1"/><rect x="0.5" y="0.5" width="27" height="4.5" fill="#000"/><rect x="1.5" y="1.5" width="3" height="3" fill="#fff"/></g>
</defs>
<g fill="#9a9a9a"><rect x="1462" y="116.5" width="2" height="2"/><rect x="1468" y="116.5" width="2" height="2"/><rect x="1474" y="116.5" width="2" height="2"/><rect x="1480" y="116.5" width="2" height="2"/><rect x="1486" y="116.5" width="2" height="2"/></g>
<rect x="1456.5" y="120" width="42.5" height="42.5" rx="5" fill="#b6b6b6"/>
<use href="#win" x="1463" y="127"/>
<path d="M1472 142 L1472 151 L1476 153 L1476 144 Z" fill="#bbb" stroke="#555" stroke-width="0.6"/><path d="M1474 141 L1474 150 L1487 146 L1487 137 Z" fill="#fff" stroke="#555" stroke-width="0.7"/><path d="M1478 148 L1483 140 L1483 146 Z" fill="none" stroke="#f04040" stroke-width="0.8"/>
<use href="#win" x="1463" y="174"/>
<rect x="1470" y="184" width="11" height="8" fill="#f6eecb" stroke="#777" stroke-width="0.7"/><circle cx="1480" cy="193" r="4.5" fill="#f6eecb" fill-opacity="0.8" stroke="#777" stroke-width="0.7"/>
<use href="#win" x="1463" y="220"/>
<rect x="1468" y="229" width="18" height="12" rx="2.5" fill="#f6f6f6" stroke="#c4d4ea" stroke-width="0.8"/>
<line x1="1458" y1="261.5" x2="1499" y2="261.5" stroke="#777" stroke-width="1" stroke-dasharray="1 2.6"/>
<use href="#win" x="1463" y="276"/>
<g fill="#000"><rect x="1466.2" y="284.4" width="4.4" height="3.3" rx="0.6"/><rect x="1466.2" y="290.4" width="4.4" height="3.3" rx="0.6"/><rect x="1466.2" y="296.4" width="4.4" height="3.4" rx="0.6"/></g>
<g fill="#fff" stroke="#6a6a6a" stroke-width="0.9"><rect x="1473.5" y="284.6" width="14.3" height="3"/><rect x="1473.5" y="290.6" width="14.3" height="3"/><rect x="1473.5" y="296.6" width="14.3" height="3"/></g>
<use href="#win" x="1463" y="322"/>
<path d="M1470.5 332.5 L1484 332.5 L1478.8 339.5 L1478.8 346 L1477.5 347.5 L1476.2 346 L1476.2 339.5 Z" fill="#b0b0b0" stroke="#666" stroke-width="0.6"/><ellipse cx="1477.2" cy="332.3" rx="7" ry="1.5" fill="#555"/><path d="M1473 334 L1477 339" stroke="#ddd" stroke-width="0.8"/>
<use href="#win" x="1463" y="368"/>
<path d="M1468.8 377.2 L1475 381 L1475 388 L1468.8 391 Z" fill="#fff" stroke="#444" stroke-width="0.7"/><rect x="1475" y="381" width="10" height="7" rx="1.5" fill="#999" stroke="#777" stroke-width="0.5"/><path d="M1477 382 V387 M1479 382 V387 M1481 382 V387" stroke="#bbb" stroke-width="0.5"/><line x1="1467" y1="384.3" x2="1487" y2="384.3" stroke="#f07070" stroke-width="0.7" stroke-dasharray="1.5 1"/>
<line x1="1458" y1="409.5" x2="1499" y2="409.5" stroke="#777" stroke-width="1" stroke-dasharray="1 2.6"/>
<rect x="1456.5" y="417" width="42.5" height="42.5" rx="5" fill="#b6b6b6"/>
<use href="#win" x="1463" y="424"/>
<path d="M1465.5 433 H1476 M1465.5 436.5 H1474.5 M1465.5 440 H1478 M1465.5 443.5 H1479" stroke="#8a8a8a" stroke-width="0.8" stroke-dasharray="1.2 0.5"/>
<line x1="1463.5" y1="447.5" x2="1491" y2="447.5" stroke="#333" stroke-width="0.6"/><path d="M1466 449.5 H1468 M1471 449.5 H1487" stroke="#333" stroke-width="0.9" stroke-dasharray="1.2 0.4"/>
<use href="#win" x="1463" y="470"/>
<rect x="1470.5" y="480.5" width="14" height="16" rx="1" fill="#c88a38" stroke="#9a6a20" stroke-width="0.6"/><rect x="1472.3" y="482.3" width="10.4" height="12.6" fill="#f2f2f2"/><path d="M1473.5 486 H1481 M1473.5 488 H1481 M1473.5 490 H1480" stroke="#bbb" stroke-width="0.6"/><path d="M1479 495 L1482.7 491.5 L1482.7 495 Z" fill="#999"/><rect x="1474.5" y="478.8" width="6" height="3" rx="0.8" fill="#8a8a80"/>
</svg>
<div class="a" style="left:1498px;top:108px;width:2px;height:691px;background:#c8c8c8"></div>

<!-- STATUS BAR -->
<div class="a" style="left:0;top:799px;width:1500px;height:45px;background:#dcdcdc"></div>
<div class="a" style="left:0;top:798px;width:1500px;height:1px;background:#d0d0d0"></div>
<div class="a" style="left:2px;top:807px;font-size:10px;line-height:12px;color:#1a1a1a;letter-spacing:0.1px">124.8,65.8</div>
<div class="a" style="left:2px;top:827px;font-size:10px;line-height:12px;color:#1a1a1a;letter-spacing:0.1px">@4.8,5.8</div>
<div class="a" style="left:253px;top:802px;width:1px;height:40px;background:#8a8a8a"></div>
<div class="a" style="left:256px;top:807px;font-size:10px;line-height:12px;color:#1a1a1a;letter-spacing:0.1px">141.0839&lt;28°</div>
<div class="a" style="left:256px;top:827px;font-size:10px;line-height:12px;color:#1a1a1a;letter-spacing:0.1px">@7.5286&lt;50°</div>
<div class="a" style="left:506px;top:819px;width:6px;height:6px;border-radius:3px;background:#c6c6c6"></div>
<div class="a" style="left:557px;top:817px;font-size:10px;line-height:12px;color:#111;letter-spacing:0.05px">Egység vagy régió kiválasztása</div>
<svg class="a" style="left:715px;top:804px" width="24" height="34" viewBox="715 804 24 34">
<rect x="717.5" y="806" width="17.5" height="29.5" rx="8.7" fill="#fff" stroke="#222" stroke-width="0.9"/>
<path d="M717.5 819.5 H735 M726.2 806 V819.5" stroke="#222" stroke-width="0.8"/>
<rect x="724.8" y="808.5" width="3" height="6" rx="1.5" fill="#fff" stroke="#222" stroke-width="0.7"/>
</svg>
<div class="a" style="left:940px;top:819px;width:6px;height:6px;border-radius:3px;background:#c6c6c6"></div>
<div class="a" style="left:949px;top:817px;font-size:10px;line-height:12px;color:#111;letter-spacing:0.15px">Nincs kiválasztott szervezet.</div>
<div class="a" style="left:1269px;top:819px;width:6px;height:6px;border-radius:3px;background:#c6c6c6"></div>

<div class="a" style="left:0;top:798px;width:82px;height:2px;background:linear-gradient(90deg,#f07070 75%,rgba(240,112,112,0))"></div>
<div class="a" style="left:71px;top:790px;width:2px;height:18px;background:linear-gradient(#f07070,#f0707000)"></div>
<!-- TOOLTIP -->
<div class="a" style="left:739px;top:413px;width:96px;height:25px;border-radius:3px;background:linear-gradient(#fafbfd,#dfe4ec);border:1px solid #b0b4ba"></div>
<div class="a" style="left:744.5px;top:418px;font-size:14px;line-height:16px;color:#111">Jobb kattintás</div>

</body></html>
